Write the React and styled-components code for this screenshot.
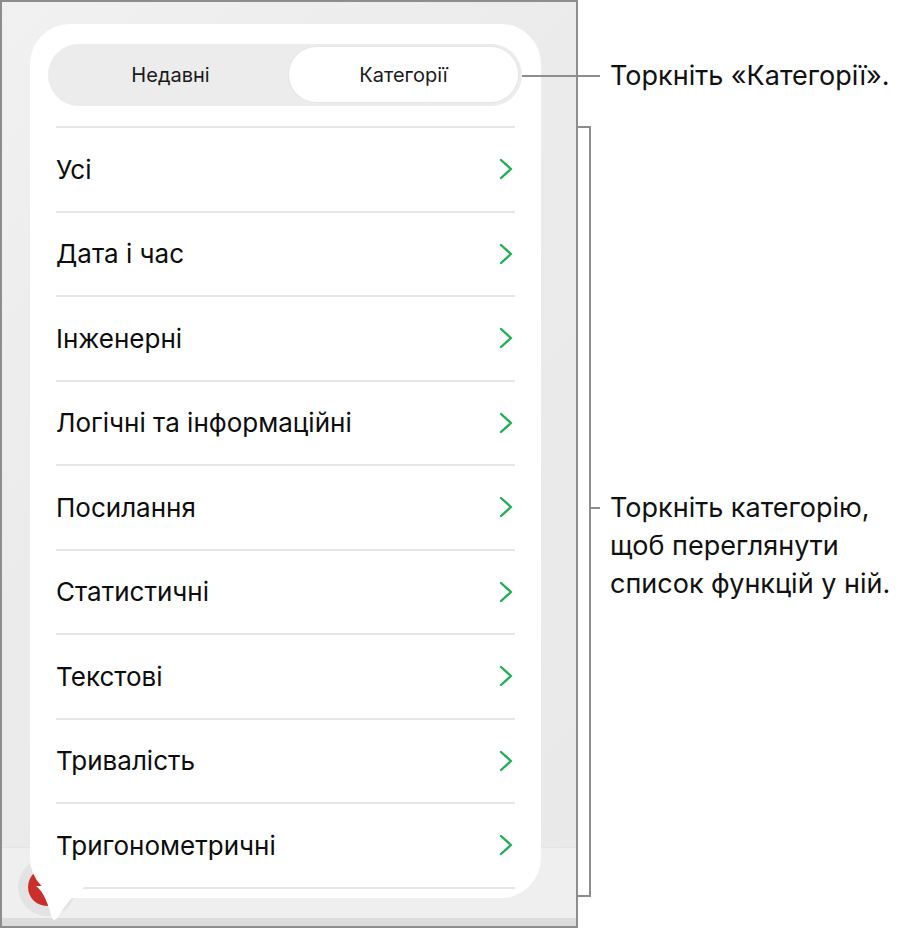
import React from 'react';
import styled, { createGlobalStyle } from 'styled-components';

const GlobalStyle = createGlobalStyle`
  html, body { margin: 0; padding: 0; background: #fff; }
  body { font-family: Inter, "Open Sans", sans-serif; color: #111; }
`;

const Page = styled.div`
  position: relative;
  width: 912px;
  height: 928px;
  overflow: hidden;
`;

const Screen = styled.div`
  position: relative;
  width: 574px;
  height: 924px;
  border: 2px solid #8d8d8d;
  display: flex;
  flex-direction: column;
  background: linear-gradient(135deg, #f1f1f1 0%, #ebebeb 40%, #e9e9e9 100%);
`;

const Workspace = styled.div`
  flex: 1;
`;

const Toolbar = styled.div`
  height: 70px;
  background: #efefef;
  border-top: 1px solid #e4e4e4;
  display: flex;
  align-items: center;
  padding-left: 16px;
`;

const BottomStrip = styled.div`
  height: 8px;
  background: #dcdcdc;
`;

const RoundButton = styled.div`
  width: 58px;
  height: 58px;
  border-radius: 50%;
  background: #e3e3e3;
  display: flex;
  align-items: center;
  justify-content: center;
  margin-top: 8px;
`;

const RedDot = styled.div`
  width: 38px;
  height: 38px;
  border-radius: 50%;
  background: #c9302c;
`;

const Popover = styled.div`
  position: absolute;
  left: 28px;
  top: 22px;
  width: 511px;
  height: 874px;
  background: #fff;
  border-radius: 40px;
  box-sizing: border-box;
  padding: 20px 19px 0 18px;
  display: flex;
  flex-direction: column;
`;

const Tail = styled.svg`
  position: absolute;
  left: 6px;
  top: 862px;
`;

const Segmented = styled.div`
  height: 62px;
  border-radius: 31px;
  background: #ececec;
  display: grid;
  grid-template-columns: 1fr 229px;
  padding: 3px 4px 4px 4px;
  box-sizing: border-box;
`;

const Segment = styled.div`
  display: flex;
  align-items: center;
  justify-content: center;
  border-radius: 28px;
  font-size: 20px;
  color: #1a1a1a;
  background: ${p => (p.active ? '#fff' : 'transparent')};
  box-shadow: ${p => (p.active ? '0 0 0 1px #e6e6e6' : 'none')};
`;

const List = styled.div`
  margin: 20px 7px 0 8px;
  border-top: 2px solid #e6e6e6;
`;

const Row = styled.div`
  height: 82.5px;
  border-bottom: 2px solid #e6e6e6;
  display: flex;
  align-items: center;
  justify-content: space-between;
  font-size: 26px;
  color: #0d0d0d;
  padding-right: 2px;
`;

const Callout = styled.div`
  position: absolute;
  background: #8d8d8d;
`;

const Note = styled.div`
  position: absolute;
  left: 610px;
  font-size: 27px;
  line-height: 38px;
  color: #111;
  white-space: nowrap;
`;

const Chevron = () => (
  <svg width="14" height="22" viewBox="0 0 14 22">
    <path d="M2 2 L12 11 L2 20" fill="none" stroke="#1fae52" strokeWidth="2.3" strokeLinecap="round" strokeLinejoin="round" />
  </svg>
);

const categories = [
  'Усі',
  'Дата і час',
  'Інженерні',
  'Логічні та інформаційні',
  'Посилання',
  'Статистичні',
  'Текстові',
  'Тривалість',
  'Тригонометричні',
];

export default function App() {
  return (
    <Page>
      <GlobalStyle />
      <Screen>
        <Workspace />
        <Toolbar>
          <RoundButton>
            <RedDot />
          </RoundButton>
        </Toolbar>
        <BottomStrip />
        <Popover>
          <Segmented>
            <Segment>Недавні</Segment>
            <Segment active>Категорії</Segment>
          </Segmented>
          <List>
            {categories.map(c => (
              <Row key={c}>
                <span>{c}</span>
                <Chevron />
              </Row>
            ))}
          </List>
          <Tail width="50" height="34" viewBox="0 0 50 34">
            <path d="M0 0 C8 6 12 18 16 32 C18 36 20 34 24 28 C30 18 38 8 50 0 Z" fill="#fff" />
          </Tail>
        </Popover>
      </Screen>

      {/* pointer to the tab switch */}
      <Callout style={{ left: 522, top: 75, width: 78, height: 2 }} />
      <Note style={{ top: 57 }}>Торкніть «Категорії».</Note>

      {/* bracket over the category list */}
      <Callout style={{ left: 578, top: 126, width: 13, height: 2 }} />
      <Callout style={{ left: 589, top: 126, width: 2, height: 771 }} />
      <Callout style={{ left: 578, top: 895, width: 13, height: 2 }} />
      <Callout style={{ left: 589, top: 507, width: 11, height: 2 }} />
      <Note style={{ top: 489 }}>
        Торкніть категорію,
        <br />
        щоб переглянути
        <br />
        список функцій у ній.
      </Note>
    </Page>
  );
}
